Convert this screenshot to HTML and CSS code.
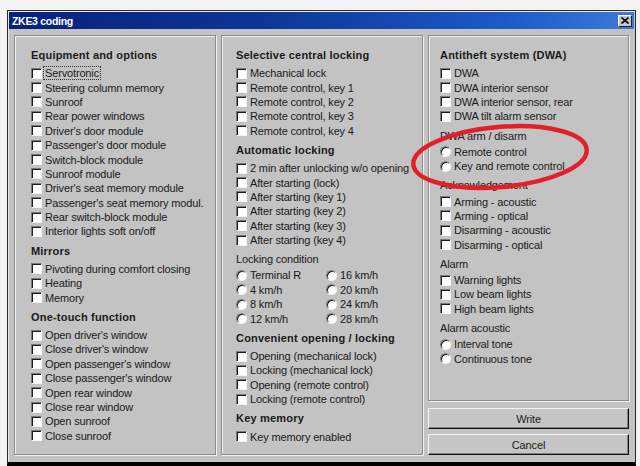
FILE: index.html
```html
<!DOCTYPE html>
<html lang="en">
<head>
<meta charset="utf-8">
<title>ZKE3 coding</title>
<link rel="stylesheet" href="styles.css">
</head>
<body>
<div class="window">
  <div class="titlebar">
    <span class="title">ZKE3 coding</span>
    <span class="close"><svg width="8" height="7" viewBox="0 0 8 7"><path d="M0.5 0.5 L7.5 6.5 M7.5 0.5 L0.5 6.5" stroke="#000" stroke-width="1.6"/></svg></span>
  </div>
  <div class="body">
    <section class="panel panel--left">
      <h2 class="heading">Equipment and options</h2>
      <ul class="list">
        <li class="item"><span class="cb"></span><span class="focus">Servotronic</span></li>
        <li class="item"><span class="cb"></span>Steering column memory</li>
        <li class="item"><span class="cb"></span>Sunroof</li>
        <li class="item"><span class="cb"></span>Rear power windows</li>
        <li class="item"><span class="cb"></span>Driver's door module</li>
        <li class="item"><span class="cb"></span>Passenger's door module</li>
        <li class="item"><span class="cb"></span>Switch-block module</li>
        <li class="item"><span class="cb"></span>Sunroof module</li>
        <li class="item"><span class="cb"></span>Driver's seat memory module</li>
        <li class="item"><span class="cb"></span>Passenger's seat memory modul.</li>
        <li class="item"><span class="cb"></span>Rear switch-block module</li>
        <li class="item"><span class="cb"></span>Interior lights soft on/off</li>
      </ul>
      <h2 class="heading">Mirrors</h2>
      <ul class="list">
        <li class="item"><span class="cb"></span>Pivoting during comfort closing</li>
        <li class="item"><span class="cb"></span>Heating</li>
        <li class="item"><span class="cb"></span>Memory</li>
      </ul>
      <h2 class="heading">One-touch function</h2>
      <ul class="list">
        <li class="item"><span class="cb"></span>Open driver's window</li>
        <li class="item"><span class="cb"></span>Close driver's window</li>
        <li class="item"><span class="cb"></span>Open passenger's window</li>
        <li class="item"><span class="cb"></span>Close passenger's window</li>
        <li class="item"><span class="cb"></span>Open rear window</li>
        <li class="item"><span class="cb"></span>Close rear window</li>
        <li class="item"><span class="cb"></span>Open sunroof</li>
        <li class="item"><span class="cb"></span>Close sunroof</li>
      </ul>
    </section>

    <section class="panel panel--middle">
      <h2 class="heading">Selective central locking</h2>
      <ul class="list">
        <li class="item"><span class="cb"></span>Mechanical lock</li>
        <li class="item"><span class="cb"></span>Remote control, key 1</li>
        <li class="item"><span class="cb"></span>Remote control, key 2</li>
        <li class="item"><span class="cb"></span>Remote control, key 3</li>
        <li class="item"><span class="cb"></span>Remote control, key 4</li>
      </ul>
      <h2 class="heading">Automatic locking</h2>
      <ul class="list">
        <li class="item"><span class="cb"></span>2 min after unlocking w/o opening</li>
        <li class="item"><span class="cb"></span>After starting (lock)</li>
        <li class="item"><span class="cb"></span>After starting (key 1)</li>
        <li class="item"><span class="cb"></span>After starting (key 2)</li>
        <li class="item"><span class="cb"></span>After starting (key 3)</li>
        <li class="item"><span class="cb"></span>After starting (key 4)</li>
      </ul>
      <h3 class="sub">Locking condition</h3>
      <ul class="list list--two">
        <li class="item"><span class="rb"></span>Terminal R</li>
        <li class="item"><span class="rb"></span>16 km/h</li>
        <li class="item"><span class="rb"></span>4 km/h</li>
        <li class="item"><span class="rb"></span>20 km/h</li>
        <li class="item"><span class="rb"></span>8 km/h</li>
        <li class="item"><span class="rb"></span>24 km/h</li>
        <li class="item"><span class="rb"></span>12 km/h</li>
        <li class="item"><span class="rb"></span>28 km/h</li>
      </ul>
      <h2 class="heading">Convenient opening / locking</h2>
      <ul class="list">
        <li class="item"><span class="cb"></span>Opening (mechanical lock)</li>
        <li class="item"><span class="cb"></span>Locking (mechanical lock)</li>
        <li class="item"><span class="cb"></span>Opening (remote control)</li>
        <li class="item"><span class="cb"></span>Locking (remote control)</li>
      </ul>
      <h2 class="heading">Key memory</h2>
      <ul class="list">
        <li class="item"><span class="cb"></span>Key memory enabled</li>
      </ul>
    </section>

    <div class="col-right">
      <section class="panel panel--right">
        <h2 class="heading">Antitheft system (DWA)</h2>
        <ul class="list">
          <li class="item"><span class="cb"></span>DWA</li>
          <li class="item"><span class="cb"></span>DWA interior sensor</li>
          <li class="item"><span class="cb"></span>DWA interior sensor, rear</li>
          <li class="item"><span class="cb"></span>DWA tilt alarm sensor</li>
        </ul>
        <h3 class="sub">DWA arm / disarm</h3>
        <ul class="list">
          <li class="item"><span class="rb"></span>Remote control</li>
          <li class="item"><span class="rb"></span>Key and remote control</li>
        </ul>
        <h3 class="sub">Acknowledgement</h3>
        <ul class="list">
          <li class="item"><span class="cb"></span>Arming - acoustic</li>
          <li class="item"><span class="cb"></span>Arming - optical</li>
          <li class="item"><span class="cb"></span>Disarming - acoustic</li>
          <li class="item"><span class="cb"></span>Disarming - optical</li>
        </ul>
        <h3 class="sub">Alarm</h3>
        <ul class="list">
          <li class="item"><span class="cb"></span>Warning lights</li>
          <li class="item"><span class="cb"></span>Low beam lights</li>
          <li class="item"><span class="cb"></span>High beam lights</li>
        </ul>
        <h3 class="sub">Alarm acoustic</h3>
        <ul class="list">
          <li class="item"><span class="rb"></span>Interval tone</li>
          <li class="item"><span class="rb"></span>Continuous tone</li>
        </ul>
      </section>
      <button class="btn btn--write" type="button">Write</button>
      <button class="btn btn--cancel" type="button">Cancel</button>
    </div>
  </div>
</div>
<svg class="annotation" width="640" height="466" viewBox="0 0 640 466">
  <ellipse cx="500" cy="157" rx="87" ry="30" transform="rotate(-5 500 157)" fill="none" stroke="#e0212b" stroke-width="4.5"/>
</svg>
</body>
</html>
```

FILE: styles.css
```css
* { box-sizing: border-box; }

html, body {
  margin: 0;
  padding: 0;
}

body {
  width: 640px;
  height: 466px;
  overflow: hidden;
  background: #f3f3f3;
  font-family: "Liberation Sans", Arial, sans-serif;
  font-size: 11px;
  color: #1a1a1a;
  position: relative;
  padding: 10px 0 0 7px;
}

.window {
  width: 629px;
  height: 456px;
  background: #c3c3c3;
  border: 1px solid #2a2a2a;
  border-bottom: 4px solid #000;
  padding: 1px;
  box-shadow: inset 1px 1px 0 #e8e8e8;
  display: flex;
  flex-direction: column;
}

.titlebar {
  height: 17px;
  flex: none;
  background: linear-gradient(to right, #08207a 0%, #0d3596 40%, #1d5bc8 80%, #3b7ad8 100%);
  display: flex;
  align-items: center;
  justify-content: space-between;
  padding: 0 2px 0 3px;
}

.title {
  color: #fff;
  font-weight: bold;
  font-size: 10.5px;
  letter-spacing: -0.3px;
}

.close {
  width: 14px;
  height: 12px;
  background: #c6c6c6;
  border: 1px solid;
  border-color: #fff #222 #222 #fff;
  display: flex;
  align-items: center;
  justify-content: center;
}

.body {
  flex: 1;
  display: grid;
  grid-template-columns: 202px 202px 1fr;
  column-gap: 5px;
  padding: 6px 5px 8px 5px;
  align-items: stretch;
}

.panel {
  background: #c3c3c3;
  border: 1px solid #8c8c8c;
  box-shadow: inset 1px 1px 0 #f2f2f2, 1px 1px 0 #f2f2f2;
  padding-top: 12px;
}

.panel--left { padding-left: 16px; }
.panel--middle { padding-left: 14px; }
.panel--right { padding-left: 11px; height: 366px; flex: none; }

.heading {
  margin: 5px 0 4px;
  height: 14px;
  line-height: 14px;
  font-size: 11px;
  font-weight: bold;
  letter-spacing: 0.2px;
  white-space: nowrap;
}

.sub {
  margin: 5px 0 2px;
  height: 14px;
  line-height: 14px;
  font-size: 11px;
  font-weight: normal;
  letter-spacing: -0.15px;
  white-space: nowrap;
}

.panel > .heading:first-child { margin-top: 0; }

.list {
  list-style: none;
  margin: 0;
  padding: 0;
}

.list--two {
  display: grid;
  grid-template-columns: 90px 1fr;
}

.item {
  height: 14.4px;
  display: flex;
  align-items: center;
  white-space: nowrap;
  letter-spacing: -0.15px;
}

.cb {
  width: 11px;
  height: 11px;
  flex: none;
  margin-right: 3px;
  background: #fff;
  border: 1px solid;
  border-color: #7a7a7a #f4f4f4 #f4f4f4 #7a7a7a;
  box-shadow: inset 1px 1px 0 #1c1c1c;
}

.rb {
  width: 11px;
  height: 11px;
  flex: none;
  margin-right: 3px;
  border-radius: 50%;
  background: #fff;
  border: 1px solid;
  border-color: #7a7a7a #f4f4f4 #f4f4f4 #7a7a7a;
  box-shadow: inset 1px 1px 0 #1c1c1c;
}

.focus {
  outline: 1px dotted #333;
  outline-offset: 0;
  padding: 0 1px;
  margin-left: -1px;
}

.col-right {
  display: flex;
  flex-direction: column;
}

.btn {
  height: 21px;
  margin: 7px 0 0;
  padding: 0;
  font-family: "Liberation Sans", Arial, sans-serif;
  font-size: 11px;
  letter-spacing: -0.15px;
  color: #1a1a1a;
  background: #c6c6c6;
  border: 1px solid;
  border-color: #f4f4f4 #111 #111 #f4f4f4;
  box-shadow: inset -1px -1px 0 #808080;
}

.btn--cancel { margin-top: 5px; }

.annotation {
  position: absolute;
  left: 0;
  top: 0;
  pointer-events: none;
}
```
